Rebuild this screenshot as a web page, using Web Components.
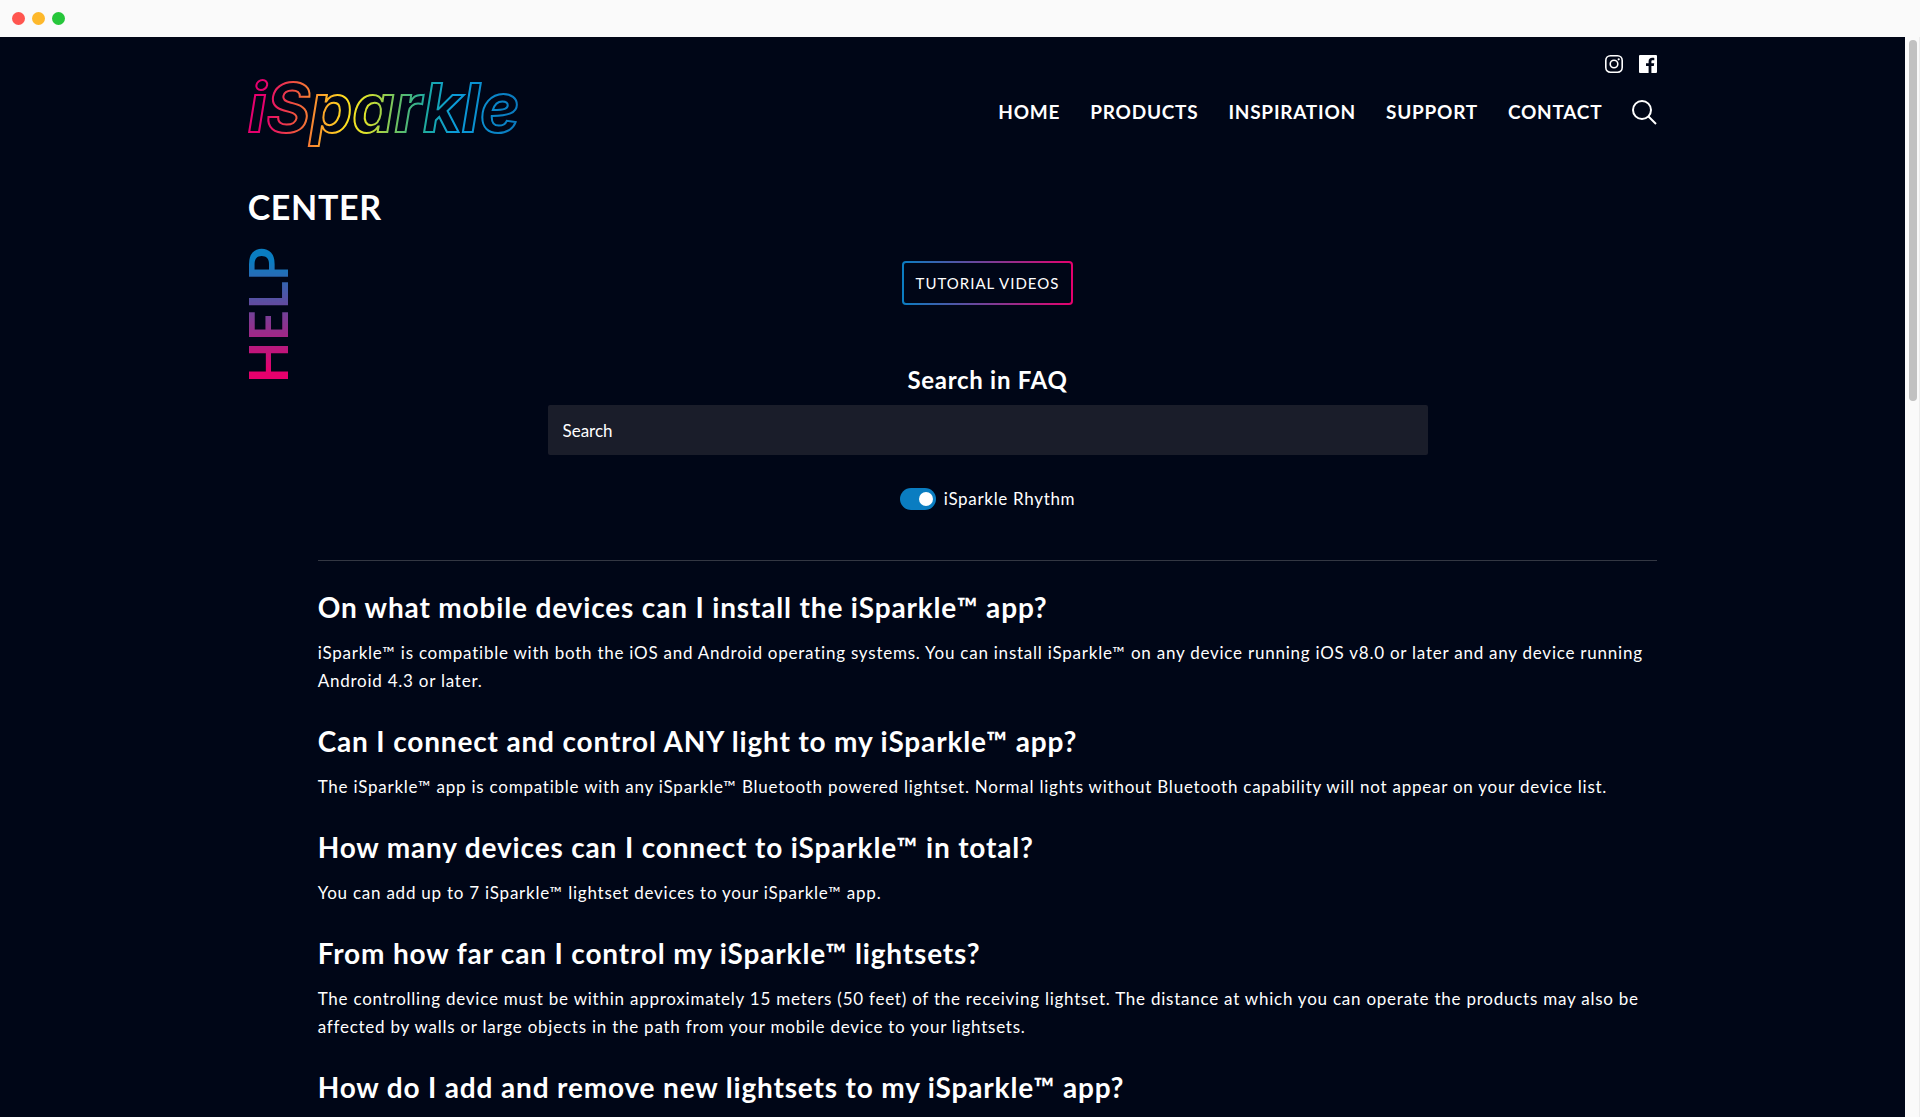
<!DOCTYPE html>
<html lang="en">
<head>
<meta charset="utf-8">
<meta name="viewport" content="width=device-width, initial-scale=1">
<title>Help Center - iSparkle</title>
<style>
    :root {
        --night: #000617;
        --field: #1a1d2a;
        --blue: #0a7dc1;
        --pink: #e5006d;
        --white: #fff;
        --container: 74%;
    }

    body {
        margin: 0;
        font-family: Lato, "Open Sans", sans-serif;
        font-size: 17px;
        line-height: 28px;
        color: var(--white);
        background-color: var(--night);
    }
</style>
</head>
<body>

<browser-window>
    <site-header>
        <nav-link href="#home">HOME</nav-link>
        <nav-link href="#products">PRODUCTS</nav-link>
        <nav-link href="#inspiration">INSPIRATION</nav-link>
        <nav-link href="#support">SUPPORT</nav-link>
        <nav-link href="#contact">CONTACT</nav-link>
    </site-header>
    <help-center>
        <span slot="title">CENTER</span>
        <span slot="side">HELP</span>
        <outline-link href="#tutorials">TUTORIAL VIDEOS</outline-link>
        <faq-search></faq-search>
        <faq-list>
            <faq-item>
                <span slot="question">On what mobile devices can I install the iSparkle™ app?</span>
                iSparkle™ is compatible with both the iOS and Android operating systems. You can install iSparkle™ on any device running iOS v8.0 or later and any device running Android 4.3 or later.
            </faq-item>
            <faq-item>
                <span slot="question">Can I connect and control ANY light to my iSparkle™ app?</span>
                The iSparkle™ app is compatible with any iSparkle™ Bluetooth powered lightset. Normal lights without Bluetooth capability will not appear on your device list.
            </faq-item>
            <faq-item>
                <span slot="question">How many devices can I connect to iSparkle™ in total?</span>
                You can add up to 7 iSparkle™ lightset devices to your iSparkle™ app.
            </faq-item>
            <faq-item>
                <span slot="question">From how far can I control my iSparkle™ lightsets?</span>
                The controlling device must be within approximately 15 meters (50 feet) of the receiving lightset. The distance at which you can operate the products may also be affected by walls or large objects in the path from your mobile device to your lightsets.
            </faq-item>
            <faq-item>
                <span slot="question">How do I add and remove new lightsets to my iSparkle™ app?</span>
            </faq-item>
        </faq-list>
    </help-center>
</browser-window>

<script>
// Attach an open shadow root filled with the given markup
function render(element, html) {
    const template = document.createElement('template');
    template.innerHTML = html;
    element.attachShadow({ mode: 'open' }).appendChild(template.content.cloneNode(true));
}

// Window frame: title bar, page area and scrollbar
class BrowserWindow extends HTMLElement {
    constructor() {
        super();
        render(this, `
            <style>
                :host {
                    display: flex;
                    flex-direction: column;
                    height: 100vh;
                    overflow: hidden;
                }

                .bar {
                    display: flex;
                    flex: none;
                    align-items: center;
                    gap: 7px;
                    height: 37px;
                    padding-left: 12px;
                    background-color: #fafafa;
                }

                .bar i {
                    width: 13px;
                    height: 13px;
                    border-radius: 50%;
                }

                .close { background-color: #ff554f; }
                .minimize { background-color: #fdb82b; }
                .maximize { background-color: #26c63a; }

                .view {
                    display: flex;
                    flex: 1;
                    min-height: 0;
                }

                main {
                    flex: 1;
                    min-width: 0;
                    overflow: hidden;
                }

                .track {
                    box-sizing: border-box;
                    flex: none;
                    width: 15px;
                    padding: 3px 3px 0 4px;
                    background-color: #fafafa;
                    border-right: 1px solid #ececec;
                }

                .thumb {
                    width: 8px;
                    height: 33.5%;
                    border-radius: 4px;
                    background-color: #c1c1c1;
                }
            </style>

            <div class="bar">
                <i class="close"></i>
                <i class="minimize"></i>
                <i class="maximize"></i>
            </div>
            <div class="view">
                <main><slot></slot></main>
                <div class="track"><div class="thumb"></div></div>
            </div>
        `);
    }
}

// Outlined neon word mark
class SiteLogo extends HTMLElement {
    constructor() {
        super();
        render(this, `
            <style>
                :host { display: block; }
                a { display: block; }
                svg { display: block; overflow: visible; }
                text {
                    font-family: Inter, Lato, sans-serif;
                    font-size: 67px;
                    font-style: italic;
                    font-weight: 700;
                    fill: none;
                    stroke: url(#neon);
                    stroke-width: 2;
                }
            </style>

            <a href="#home">
                <svg width="272" height="68" viewBox="0 0 272 68">
                    <defs>
                        <linearGradient id="neon" gradientUnits="userSpaceOnUse" x1="0" y1="0" x2="272" y2="0">
                            <stop offset="0" stop-color="#e5006d"/>
                            <stop offset=".06" stop-color="#e5006d"/>
                            <stop offset=".17" stop-color="#f0503f"/>
                            <stop offset=".26" stop-color="#fb9a2c"/>
                            <stop offset=".36" stop-color="#ffe01f"/>
                            <stop offset=".43" stop-color="#dde32c"/>
                            <stop offset=".56" stop-color="#5fbd6a"/>
                            <stop offset=".66" stop-color="#1aa9a5"/>
                            <stop offset=".76" stop-color="#0a9bd9"/>
                            <stop offset="1" stop-color="#0a78bd"/>
                        </linearGradient>
                    </defs>
                    <text x="0" y="52">iSparkle</text>
                </svg>
            </a>
        `);
    }
}

class NavLink extends HTMLElement {
    constructor() {
        super();
        render(this, `
            <style>
                :host { display: block; }
                a {
                    color: var(--white);
                    font-size: 19px;
                    font-weight: 700;
                    letter-spacing: .04em;
                    text-decoration: none;
                }
                a:hover { color: var(--blue); }
            </style>

            <a><slot></slot></a>
        `);
    }

    connectedCallback() {
        this.shadowRoot.querySelector('a').setAttribute('href', this.getAttribute('href'));
    }
}

class SiteHeader extends HTMLElement {
    constructor() {
        super();
        render(this, `
            <style>
                :host { display: block; }

                header {
                    display: flex;
                    justify-content: space-between;
                    box-sizing: border-box;
                    width: var(--container);
                    margin: 0 auto;
                    padding-top: 18px;
                }

                site-logo { margin-top: 25px; }

                .right {
                    display: flex;
                    flex-direction: column;
                    align-items: flex-end;
                    gap: 25px;
                }

                .social {
                    display: flex;
                    gap: 16px;
                }

                a, button, svg { display: block; }

                nav {
                    display: flex;
                    align-items: center;
                    gap: 30px;
                }

                button {
                    padding: 0;
                    border: 0;
                    background: none;
                    color: var(--white);
                    cursor: pointer;
                }
            </style>

            <header>
                <site-logo></site-logo>
                <div class="right">
                    <div class="social">
                        <a href="#instagram" aria-label="Instagram">
                            <svg width="18" height="18" viewBox="0 0 18 18" fill="none" stroke="#fff" stroke-width="1.6">
                                <rect x=".8" y=".8" width="16.400" height="16.400" rx="4.600"/>
                                <circle cx="9" cy="9" r="3.800"/>
                                <circle cx="13.700" cy="4.300" r="1.100" fill="#fff" stroke="none"/>
                            </svg>
                        </a>
                        <a href="#facebook" aria-label="Facebook">
                            <svg width="18" height="18" viewBox="0 0 18 18" fill="#fff">
                                <path d="M1 0h16a1 1 0 0 1 1 1v16a1 1 0 0 1-1 1h-4.600v-7h2.400l.4-2.700h-2.800V6.600c0-.8.3-1.300 1.400-1.300h1.500V2.900c-.3 0-1.100-.1-2.100-.1-2.200 0-3.600 1.300-3.600 3.600v1.900H7V11h2.600v7H1a1 1 0 0 1-1-1V1a1 1 0 0 1 1-1z"/>
                            </svg>
                        </a>
                    </div>
                    <nav>
                        <slot></slot>
                        <button type="button" aria-label="Search">
                            <svg width="25" height="25" viewBox="0 0 25 25" fill="none" stroke="currentColor" stroke-width="2">
                                <circle cx="10" cy="10" r="9"/>
                                <path d="M16.500 16.500L24 24"/>
                            </svg>
                        </button>
                    </nav>
                </div>
            </header>
        `);
    }
}

class HelpCenter extends HTMLElement {
    constructor() {
        super();
        render(this, `
            <style>
                :host {
                    display: block;
                    width: var(--container);
                    margin: 0 auto;
                    padding-top: 34px;
                }

                h1 {
                    margin: 0;
                    font-size: 34px;
                    line-height: 50px;
                    font-weight: 700;
                    letter-spacing: .02em;
                }

                .columns {
                    display: grid;
                    grid-template-columns: 70px minmax(0, 1fr);
                    align-items: start;
                }

                h2 {
                    justify-self: start;
                    margin: 15px 0 0;
                    font-size: 54px;
                    line-height: 40px;
                    font-weight: 700;
                    letter-spacing: .01em;
                    writing-mode: vertical-rl;
                    transform: rotate(180deg);
                    color: transparent;
                    background: linear-gradient(to top, var(--blue) 10%, var(--pink) 90%);
                    -webkit-background-clip: text;
                    background-clip: text;
                }

                .content {
                    display: flex;
                    flex-direction: column;
                    align-items: center;
                    padding-top: 29px;
                }
            </style>

            <h1><slot name="title"></slot></h1>
            <div class="columns">
                <h2><slot name="side"></slot></h2>
                <div class="content"><slot></slot></div>
            </div>
        `);
    }
}

class OutlineLink extends HTMLElement {
    constructor() {
        super();
        render(this, `
            <style>
                :host { display: block; }

                a {
                    display: block;
                    padding: 6px 12px;
                    border: 2px solid transparent;
                    border-radius: 4px;
                    color: var(--white);
                    font-size: 15px;
                    letter-spacing: 1px;
                    text-decoration: none;
                    background:
                        linear-gradient(var(--night), var(--night)) padding-box,
                        linear-gradient(to right, var(--blue), var(--pink)) border-box;
                }
            </style>

            <a><slot></slot></a>
        `);
    }

    connectedCallback() {
        this.shadowRoot.querySelector('a').setAttribute('href', this.getAttribute('href'));
    }
}

class FaqSearch extends HTMLElement {
    constructor() {
        super();
        render(this, `
            <style>
                :host {
                    display: block;
                    width: 100%;
                    max-width: 880px;
                    margin-top: 60px;
                }

                form {
                    display: flex;
                    flex-direction: column;
                    align-items: center;
                }

                .title {
                    font-size: 24px;
                    line-height: 30px;
                    font-weight: 700;
                    letter-spacing: .03em;
                }

                .field {
                    box-sizing: border-box;
                    width: 100%;
                    height: 50px;
                    margin-top: 10px;
                    padding: 0 15px;
                    border: 0;
                    border-radius: 2px;
                    background-color: var(--field);
                    color: var(--white);
                    font-family: inherit;
                    font-size: 17px;
                }

                .field::placeholder {
                    color: var(--white);
                    opacity: 1;
                }

                .switch {
                    display: flex;
                    align-items: center;
                    gap: 8px;
                    margin-top: 30px;
                    letter-spacing: .04em;
                }

                .switch input {
                    display: flex;
                    align-items: center;
                    box-sizing: border-box;
                    width: 36px;
                    height: 22px;
                    margin: 0;
                    padding: 0 3px;
                    border-radius: 11px;
                    background-color: #555;
                    appearance: none;
                }

                .switch input::before {
                    content: "";
                    width: 14px;
                    height: 14px;
                    border-radius: 50%;
                    background-color: var(--white);
                }

                .switch input:checked {
                    justify-content: flex-end;
                    background-color: var(--blue);
                }
            </style>

            <form>
                <label class="title" for="query">Search in FAQ</label>
                <input class="field" id="query" type="text" placeholder="Search">
                <label class="switch">
                    <input type="checkbox" checked>
                    <span>iSparkle Rhythm</span>
                </label>
            </form>
        `);
    }
}

class FaqList extends HTMLElement {
    constructor() {
        super();
        render(this, `
            <style>
                :host {
                    display: flex;
                    flex-direction: column;
                    gap: 28px;
                    box-sizing: border-box;
                    width: 100%;
                    margin-top: 47px;
                    padding-top: 28px;
                    border-top: 1px solid #333743;
                }
            </style>

            <slot></slot>
        `);
    }
}

class FaqItem extends HTMLElement {
    constructor() {
        super();
        render(this, `
            <style>
                :host { display: block; }

                h3 {
                    margin: 0 0 14px;
                    font-size: 28px;
                    line-height: 36px;
                    font-weight: 700;
                    letter-spacing: .03em;
                }

                p {
                    margin: 0;
                    letter-spacing: .045em;
                }
            </style>

            <h3><slot name="question"></slot></h3>
            <p><slot></slot></p>
        `);
    }
}

customElements.define('browser-window', BrowserWindow);
customElements.define('site-logo', SiteLogo);
customElements.define('nav-link', NavLink);
customElements.define('site-header', SiteHeader);
customElements.define('help-center', HelpCenter);
customElements.define('outline-link', OutlineLink);
customElements.define('faq-search', FaqSearch);
customElements.define('faq-list', FaqList);
customElements.define('faq-item', FaqItem);
</script>
</body>
</html>
